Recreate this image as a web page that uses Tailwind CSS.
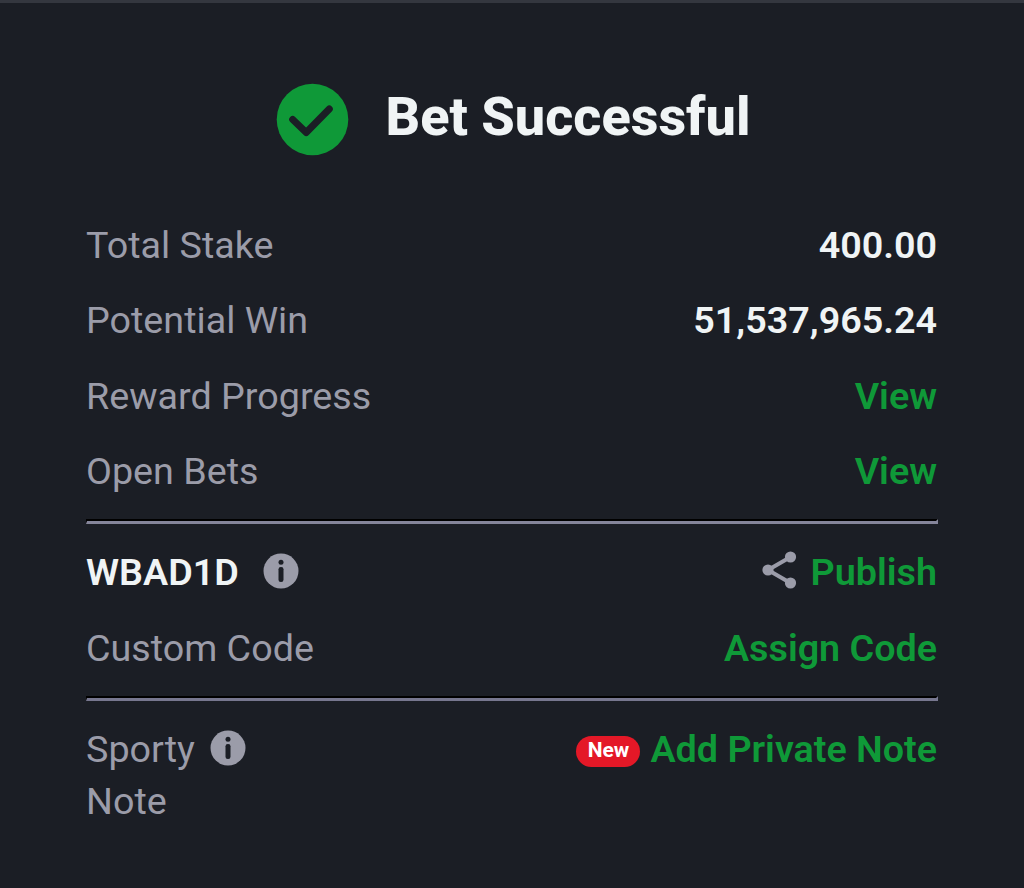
<!DOCTYPE html>
<html lang="en">
  <head>
    <meta charset="UTF-8" />
    <meta name="viewport" content="width=device-width, initial-scale=1.0" />
    <title>Bet Successful</title>
    <script src="https://cdn.jsdelivr.net/npm/@tailwindcss/browser@4"></script>
  </head>
  <body class="h-screen overflow-hidden bg-[#1b1e25] border-t-3 border-[#34373f] font-[Roboto,sans-serif] text-[37.7px] leading-[52px] text-[#9b9ca9]">
    <!-- Header -->
    <header class="flex items-start justify-center gap-[36px] pt-[80px] pl-[3px]">
      <svg class="size-[73px]" viewBox="0 0 73 73" fill="none">
        <circle cx="36.5" cy="36.5" r="35.8" fill="#0f9938" />
        <path d="M16.7 36.5L30.2 49.5L53.3 26" stroke="#1b1e25" stroke-width="7" stroke-linecap="round" stroke-linejoin="round" />
      </svg>
      <h1 class="pt-[2px] text-[54px] leading-[64px] font-extrabold text-[#f0f4f5]">Bet Successful</h1>
    </header>

    <main class="px-[86px] pt-[63px]">
      <!-- Stake -->
      <div class="space-y-[23.4px] pr-px">
        <div class="flex justify-between">
          <span>Total Stake</span>
          <span class="font-semibold text-[#f0f4f5]">400.00</span>
        </div>
        <div class="flex justify-between">
          <span>Potential Win</span>
          <span class="font-semibold text-[#f0f4f5]">51,537,965.24</span>
        </div>
        <div class="flex justify-between">
          <span>Reward Progress</span>
          <a href="#" class="font-semibold text-[#0f9938]">View</a>
        </div>
        <div class="flex justify-between">
          <span>Open Bets</span>
          <a href="#" class="font-semibold text-[#0f9938]">View</a>
        </div>
      </div>

      <div class="mt-[21.8px] h-[5px] border-t-2 border-b-3 border-l border-r-2 border-t-black border-l-black border-r-[#85859a] border-b-[#85859a]"></div>

      <!-- Codes -->
      <div class="mt-[22px] space-y-6 pr-px">
        <div class="flex justify-between">
          <div class="flex items-center gap-[24px]">
            <span class="font-semibold text-[#f0f4f5]">WBAD1D</span>
            <svg class="size-[36px] -mt-[2px]" viewBox="0 0 36 36">
              <circle cx="18" cy="18" r="17.5" fill="#9b9ca9" />
              <circle cx="18" cy="9.2" r="2.5" fill="#1b1e25" />
              <rect x="15.5" y="14" width="5" height="15" rx="2.3" fill="#1b1e25" />
            </svg>
          </div>
          <div class="flex items-center gap-[14px]">
            <svg class="w-[35px] h-[38px] -mt-[3px]" viewBox="0 0 35 38" fill="#9b9ca9">
              <path d="M28.5 6L6 19L28.5 32" fill="none" stroke="#9b9ca9" stroke-width="4" />
              <circle cx="28.5" cy="6" r="5.6" />
              <circle cx="6" cy="19" r="5.6" />
              <circle cx="28.5" cy="32" r="5.6" />
            </svg>
            <a href="#" class="font-semibold text-[#0f9938]">Publish</a>
          </div>
        </div>
        <div class="flex justify-between">
          <span>Custom Code</span>
          <a href="#" class="font-semibold text-[#0f9938]">Assign Code</a>
        </div>
      </div>

      <div class="mt-[22px] h-[5px] border-t-2 border-b-3 border-l border-r-2 border-t-black border-l-black border-r-[#77778f] border-b-[#77778f]"></div>

      <!-- Note -->
      <div class="mt-[22px] flex items-start justify-between pr-px">
        <div class="flex items-start gap-[15px]">
          <span>Sporty<br />Note</span>
          <svg class="size-[36px] mt-[7px]" viewBox="0 0 36 36">
            <circle cx="18" cy="18" r="17.5" fill="#9b9ca9" />
            <circle cx="18" cy="9.2" r="2.5" fill="#1b1e25" />
            <rect x="15.5" y="14" width="5" height="15" rx="2.3" fill="#1b1e25" />
          </svg>
        </div>
        <div class="flex items-center gap-[10px]">
          <span class="mt-[5px] h-[31px] w-[64px] rounded-full bg-[#e41827] text-center text-[21px] leading-[29px] font-bold text-white">New</span>
          <a href="#" class="font-semibold text-[#0f9938]">Add Private Note</a>
        </div>
      </div>
    </main>
  </body>
</html>
